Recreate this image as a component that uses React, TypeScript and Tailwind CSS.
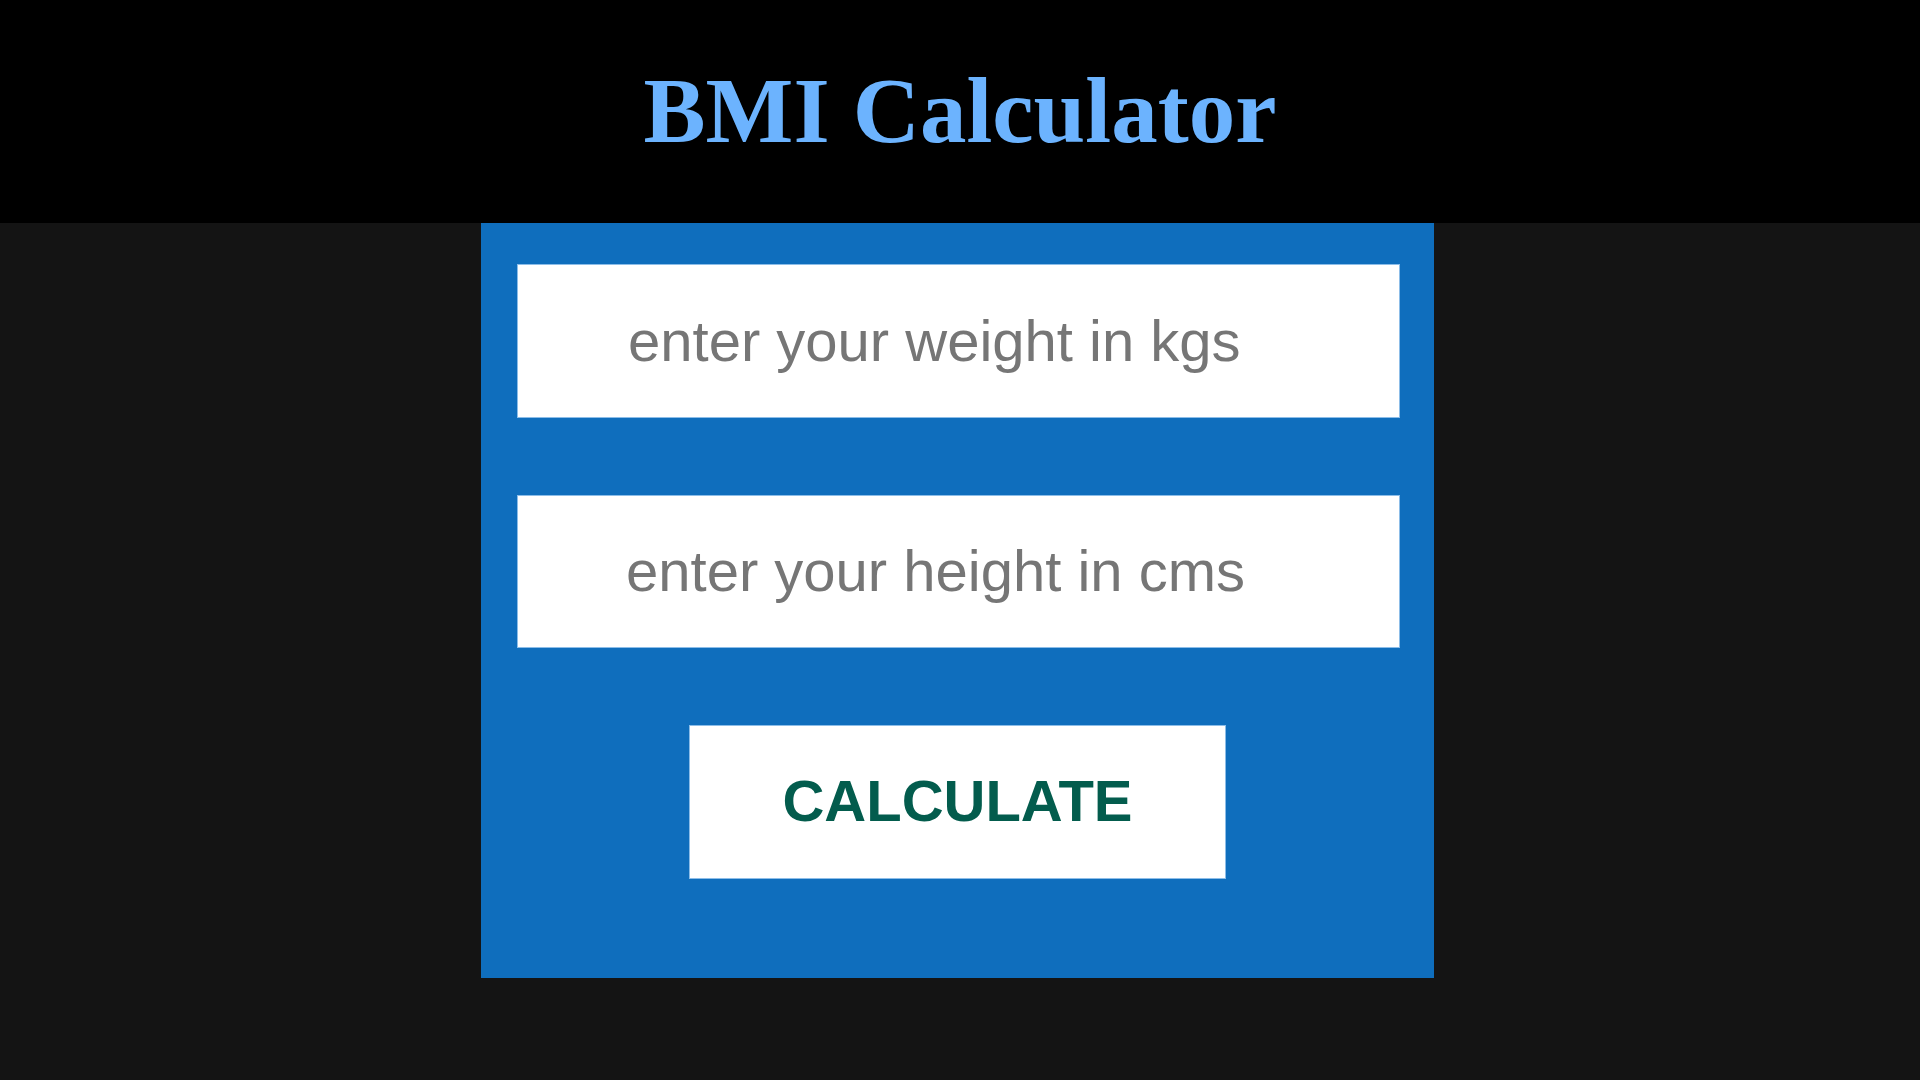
import React from "react";

export default function App() {
  return (
    <div className="min-h-screen w-full bg-[#141414] font-['Liberation_Sans',Arial,sans-serif]">
      <header className="h-[223px] bg-black pt-[64px]">
        <h1 className="text-center font-['Liberation_Serif','Times_New_Roman',serif] text-[93px] font-bold leading-none text-[#6cb3fe]">
          BMI Calculator
        </h1>
      </header>
      <main className="ml-[481px] w-[953px] bg-[#0f6ebd] pt-[41px] pb-[99px]">
        <div className="flex flex-col">
          <input
            type="text"
            placeholder="enter your weight in kgs"
            className="ml-[36px] h-[154px] w-[883px] border border-[#8cbde8] bg-white pl-[110px] pb-[2px] text-[58px] text-black outline-none placeholder:text-[#767676]"
          />
          <input
            type="text"
            placeholder="enter your height in cms"
            className="ml-[36px] mt-[77px] h-[153px] w-[883px] border border-[#8cbde8] bg-white pl-[108px] pb-[2px] text-[58px] text-black outline-none placeholder:text-[#767676]"
          />
          <button
            type="button"
            className="ml-[208px] mt-[77px] h-[154px] w-[537px] border border-[#8cbde8] bg-white pb-[2px] text-[58px] font-bold leading-none text-[#035c4d]"
          >
            CALCULATE
          </button>
        </div>
      </main>
    </div>
  );
}
